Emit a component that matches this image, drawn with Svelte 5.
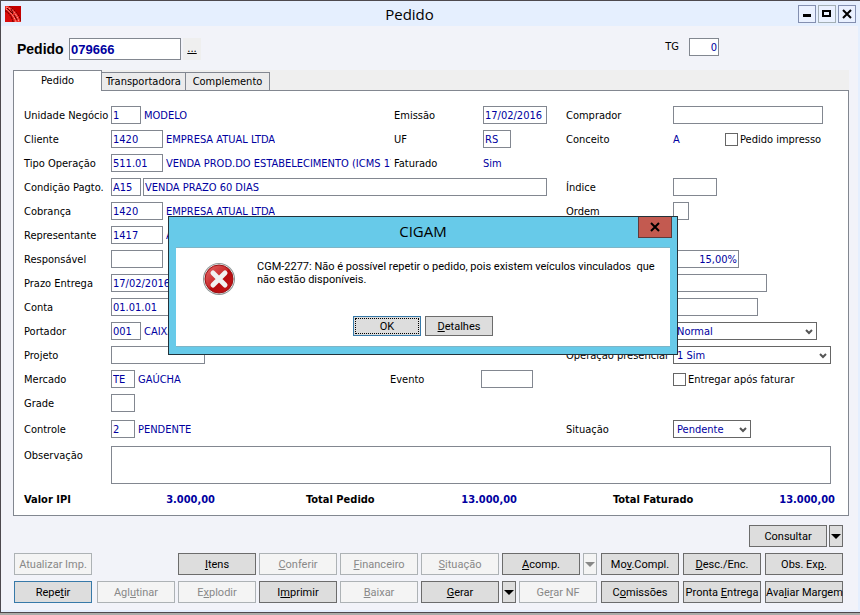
<script>
    const fields = [
        { id: 'unidade', label: 'Unidade Negócio', value: '1', size: 'w30', text: 'MODELO' },
        { id: 'cliente', label: 'Cliente', value: '1420', size: 'w52', text: 'EMPRESA ATUAL LTDA' },
        { id: 'tipo', label: 'Tipo Operação', value: '511.01', size: 'w52', text: 'VENDA PROD.DO ESTABELECIMENTO (ICMS 17' },
        { id: 'condicao', label: 'Condição Pagto.', value: 'A15', size: 'w30', extra: 'VENDA PRAZO 60 DIAS' },
        { id: 'cobranca', label: 'Cobrança', value: '1420', size: 'w52', text: 'EMPRESA ATUAL LTDA' },
        { id: 'representante', label: 'Representante', value: '1417', size: 'w52', text: 'A' },
        { id: 'responsavel', label: 'Responsável', value: '', size: 'w52' },
        { id: 'prazo', label: 'Prazo Entrega', value: '17/02/2016', size: 'w66' },
        { id: 'conta', label: 'Conta', value: '01.01.01', size: 'w94' },
        { id: 'portador', label: 'Portador', value: '001', size: 'w30', text: 'CAIXA' },
        { id: 'projeto', label: 'Projeto', value: '', size: 'w94' },
        { id: 'mercado', label: 'Mercado', value: 'TE', size: 'w24', text: 'GAÚCHA' },
        { id: 'grade', label: 'Grade', value: '', size: 'w24' }
    ];

    const middle = {
        unidade: { label: 'Emissão', value: '17/02/2016', size: 'w64' },
        cliente: { label: 'UF', value: 'RS', size: 'w28' },
        tipo: { label: 'Faturado', text: 'Sim' },
        mercado: { label: 'Evento', value: '', size: 'w52' }
    };

    const right = {
        unidade: { label: 'Comprador', value: '', size: 'w150' },
        cliente: { label: 'Conceito', text: 'A', check: 'Pedido impresso' },
        condicao: { label: 'Índice', value: '', size: 'w44' },
        cobranca: { label: 'Ordem', value: '', size: 'w16' },
        responsavel: { value: '15,00%', size: 'w66', align: 'right' },
        prazo: { value: '', size: 'w94' },
        conta: { value: '', size: 'w85' },
        portador: { options: ['Normal'], size: 'w144' },
        projeto: { label: 'Operação presencial', options: ['1 Sim', '0 Não'], size: 'w158' },
        mercado: { check: 'Entregar após faturar' }
    };

    // [before, access key, after, state]
    const rows = [
        {
            first: ['Atualizar Imp.', '', '', 'off'],
            center: [
                ['', 'I', 'tens'],
                ['', 'C', 'onferir', 'off'],
                ['', 'F', 'inanceiro', 'off'],
                ['', 'S', 'ituação', 'off'],
                ['', 'A', 'comp.'],
                ['arrow', '', '', 'off']
            ],
            end: [['Mo', 'v', '.Compl.'], ['', 'D', 'esc./Enc.'], ['Obs. Ex', 'p', '.']]
        },
        {
            first: ['Repe', 't', 'ir', 'active'],
            center: [
                ['Agl', 'u', 'tinar', 'off'],
                ['E', 'x', 'plodir', 'off'],
                ['I', 'm', 'primir'],
                ['', 'B', 'aixar', 'off'],
                ['', 'G', 'erar'],
                ['arrow', '', ''],
                ['Ge', 'r', 'ar NF', 'off']
            ],
            end: [['C', 'o', 'missões'], ['Pronta ', 'E', 'ntrega'], ['Ava', 'l', 'iar Margem']]
        }
    ];

    let dialogOpen = $state(true);
</script>

{#snippet actionButton(b)}
    {#if b[0] === 'arrow'}
        <button class="btn drop" disabled={b[3] === 'off'} aria-label="Mais opções">
            <svg width="10" height="5" viewBox="0 0 10 5"><path d="M0 0H10L5 5Z" fill="currentColor" /></svg>
        </button>
    {:else}
        <button class="btn" class:active={b[3] === 'active'} disabled={b[3] === 'off'}>{b[0]}<u>{b[1]}</u>{b[2]}</button>
    {/if}
{/snippet}

{#snippet dropdown(id, options, size)}
    <span class="select {size}">
        <select {id} aria-label={id}>
            {#each options as option}
                <option>{option}</option>
            {/each}
        </select>
        <svg width="8" height="7" viewBox="0 0 8 7"><path d="M1 2L4 5L7 2" fill="none" stroke="#555" stroke-width="2" /></svg>
    </span>
{/snippet}

<div class="window">
    <header class="titlebar">
        <svg width="16" height="16" viewBox="0 0 16 16">
            <rect width="16" height="16" fill="#b80404" />
            <path d="M5 0H16V13C14 8 10 3 5 0Z" fill="#c40000" />
            <path d="M0 0H4C10 4 14 9 16 16H9C8 11 5 6 0 3Z" fill="#ec2b24" />
            <path d="M0 5C4 7 7 11 8 16H0Z" fill="#d90c0c" />
            <path d="M1 1C7 3 12 8 14 16M1 3C5 6 9 10 11 16" fill="none" stroke="#ff9a90" stroke-dasharray="2 1" />
            <path d="M4 0C10 4 14 9 16 15M0 5C4 7 7 11 8 16" fill="none" stroke="#7a0000" stroke-dasharray="2 1" />
            <path d="M2 2L8 8M6 3L8 7M9 9L12 14" stroke="#5c0000" />
        </svg>
        <h1>Pedido</h1>
        <div class="controls">
            <button aria-label="Minimizar"><svg width="16" height="16" viewBox="0 0 16 16"><path d="M4 8H12V11H4Z" /></svg></button>
            <button class="max" aria-label="Maximizar"><svg width="16" height="16" viewBox="0 0 16 16"><path d="M4 5H11V10H4Z" fill="none" stroke="#000" stroke-width="2" /></svg></button>
            <button aria-label="Fechar"><svg width="16" height="16" viewBox="0 0 16 16"><path d="M4 4L12 12M12 4L4 12" stroke="#000" stroke-width="2" /></svg></button>
        </div>
    </header>

    <div class="content">
        <div class="top">
            <label class="big" for="pedido">Pedido</label>
            <input id="pedido" class="number" value="079666" />
            <button class="lookup" aria-label="Procurar pedido">...</button>
            <div class="tg">
                <label for="tg">TG</label>
                <input id="tg" class="w30 right" value="0" />
            </div>
        </div>

        <div class="tabs" role="tablist">
            <button class="selected" role="tab" aria-selected="true">Pedido</button>
            <button role="tab" aria-selected="false">Transportadora</button>
            <button role="tab" aria-selected="false">Complemento</button>
        </div>

        <main class="panel">
            {#each fields as f}
                {@const m = middle[f.id]}
                {@const r = right[f.id]}
                <div class="row" class:event={f.id === 'mercado'}>
                    <div class="left" class:span={f.extra}>
                        <label for={f.id}>{f.label}</label>
                        <input id={f.id} class={f.size} value={f.value} />
                        {#if f.extra}
                            <input class="grow" aria-label="Descrição da condição" value={f.extra} />
                        {:else if f.text}
                            <span class="value">{f.text}</span>
                        {/if}
                    </div>
                    {#if !f.extra}
                        <div class="middle">
                            {#if m}
                                <label for="m-{f.id}">{m.label}</label>
                                {#if m.text}
                                    <output id="m-{f.id}">{m.text}</output>
                                {:else}
                                    <input id="m-{f.id}" class={m.size} value={m.value} />
                                {/if}
                            {/if}
                        </div>
                    {/if}
                    <div class="side">
                        {#if r}
                            <label for="r-{f.id}">{r.label ?? ''}</label>
                            {#if r.options}
                                {@render dropdown('r-' + f.id, r.options, r.size)}
                            {:else if r.size}
                                <input id="r-{f.id}" class="{r.size} {r.align ?? ''}" value={r.value} />
                            {:else if r.text}
                                <output id="r-{f.id}" class="w52">{r.text}</output>
                            {/if}
                            {#if r.check}
                                <label class="check"><input type="checkbox" />{r.check}</label>
                            {/if}
                        {/if}
                    </div>
                </div>
            {/each}

            <div class="row control">
                <div class="left">
                    <label for="controle">Controle</label>
                    <input id="controle" class="w24" value="2" />
                    <span class="value">PENDENTE</span>
                </div>
                <div class="middle"></div>
                <div class="side">
                    <label for="situacao">Situação</label>
                    {@render dropdown('situacao', ['Pendente'], 'w78')}
                </div>
            </div>

            <div class="notes">
                <label for="obs">Observação</label>
                <textarea id="obs"></textarea>
            </div>

            <div class="totals">
                <span>Valor IPI</span><b>3.000,00</b>
                <span>Total Pedido</span><b>13.000,00</b>
                <span>Total Faturado</span><b>13.000,00</b>
            </div>
        </main>

        <footer>
            <div class="actions">
                <div class="end split">
                    <button class="btn">Consultar</button>
                    {@render actionButton(['arrow', '', ''])}
                </div>
            </div>
            {#each rows as row}
                <div class="actions">
                    {@render actionButton(row.first)}
                    <div class="center">
                        {#each row.center as b}
                            {@render actionButton(b)}
                        {/each}
                    </div>
                    <div class="end">
                        {#each row.end as b}
                            {@render actionButton(b)}
                        {/each}
                    </div>
                </div>
            {/each}
        </footer>
    </div>

    {#if dialogOpen}
        <div class="dialog" role="alertdialog" aria-labelledby="dialog-title" aria-describedby="dialog-text">
            <div class="dialog-head">
                <h2 id="dialog-title">CIGAM</h2>
                <button class="close" aria-label="Fechar" onclick={() => (dialogOpen = false)}>
                    <svg width="10" height="10" viewBox="0 0 10 10"><path d="M1 1L9 9M9 1L1 9" stroke="#000" stroke-width="2" /></svg>
                </button>
            </div>
            <div class="dialog-body">
                <div class="message">
                    <svg width="34" height="34" viewBox="0 0 34 34">
                        <defs>
                            <linearGradient id="red" x1="0" y1="0" x2="1" y2="1">
                                <stop offset="0" stop-color="#e46a6a" />
                                <stop offset="0.48" stop-color="#c92a2c" />
                                <stop offset="0.52" stop-color="#b50a0d" />
                                <stop offset="1" stop-color="#c5161a" />
                            </linearGradient>
                        </defs>
                        <circle cx="17" cy="17" r="16" fill="#8f9494" />
                        <circle cx="17" cy="17" r="15" fill="#e8eeee" />
                        <circle cx="17" cy="17" r="14" fill="url(#red)" stroke="#9b1013" />
                        <path d="M11 11L23 23M23 11L11 23" stroke="#f1f1f1" stroke-width="5" stroke-linecap="round" />
                    </svg>
                    <p id="dialog-text">CGM-2277: Não é possível repetir o pedido, pois existem veículos vinculados&nbsp; que não estão disponíveis.</p>
                </div>
                <div class="dialog-buttons">
                    <button class="btn focused" onclick={() => (dialogOpen = false)}>OK</button>
                    <button class="btn"><u>D</u>etalhes</button>
                </div>
            </div>
        </div>
    {/if}
</div>

<style>
    :global(body) {
        background: #aaaca9;
        margin: 0;
    }

    .window {
        position: relative;
        box-sizing: border-box;
        border: 1px solid #4d494e;
        border-right: 0;
        background: #e5effe;
        padding: 0 2px 2px 0;
        font: 11px/14px "DejaVu Sans Condensed", "Noto Sans", sans-serif;
        color: #000;
    }

    .window * {
        box-sizing: border-box;
    }

    input, select, textarea, button {
        font: inherit;
        color: inherit;
        margin: 0;
        border-radius: 0;
    }

    input, select, textarea {
        height: 18px;
        padding: 1px 1px 0;
        border: 1px solid #828790;
        background: #fff;
        color: #0000a0;
        flex-shrink: 0;
    }

    button {
        padding: 0;
    }

    .right { text-align: right; }
    .w16 { width: 16px; }
    .w24 { width: 24px; }
    .w28 { width: 28px; }
    .w30 { width: 30px; }
    .w44 { width: 44px; }
    .w52 { width: 52px; }
    .w64 { width: 64px; }
    .w66 { width: 66px; }
    .w78 { width: 78px; }
    .w85 { width: 85px; }
    .w94 { width: 94px; }
    .w144 { width: 144px; }
    .w150 { width: 150px; }
    .w158 { width: 158px; }

    .titlebar {
        display: flex;
        align-items: center;
        height: 25px;
        padding: 0 2px 0 4px;
    }

    h1, h2 {
        flex: 1;
        margin: 0;
        font: 15px/20px "Open Sans", "Noto Sans", sans-serif;
        text-align: center;
    }

    .controls {
        display: flex;
        gap: 2px;
    }

    .controls button {
        display: flex;
        width: 18px;
        height: 18px;
        border: 1px solid #838fb0;
        background: #eaf1ff;
    }

    .controls .max {
        border-color: #a3afb5;
    }

    .content {
        background: #f2f3f9;
        padding: 12px 9px 7px 12px;
    }

    .top {
        display: flex;
        align-items: flex-start;
        height: 32px;
    }

    .big {
        width: 56px;
        padding-left: 4px;
        font: bold 14px/22px "Liberation Sans", sans-serif;
    }

    .top .number {
        width: 112px;
        height: 22px;
        font: bold 13px "Liberation Sans", sans-serif;
    }

    .lookup {
        width: 18px;
        height: 22px;
        margin-left: 2px;
        border: 0;
        background: #efefef;
        text-decoration: underline;
    }

    .tg {
        display: flex;
        align-items: center;
        gap: 10px;
        margin-left: auto;
        padding-right: 130px;
    }

    .tabs {
        display: flex;
        align-items: flex-end;
        height: 20px;
        background: #efefef;
    }

    .tabs button {
        height: 18px;
        width: 84px;
        border: 1px solid #828790;
        border-width: 1px 1px 0 0;
        background: #ebebeb;
        white-space: nowrap;
    }

    .tabs .selected {
        width: 89px;
        height: 21px;
        margin-bottom: -1px;
        border-left-width: 1px;
        background: #fff;
        z-index: 1;
    }

    .panel {
        padding: 12px 17px 8px 10px;
        border: 1px solid #828790;
        background: #fff;
    }

    .row {
        display: grid;
        grid-template-columns: minmax(0, 1fr) 172px 265px;
        height: 24px;
        align-items: center;
        white-space: nowrap;
    }

    .row.event {
        grid-template-columns: minmax(0, 1fr) 176px 265px;
    }

    .row.event .middle > label {
        width: 91px;
    }

    .row.control {
        height: 28px;
    }

    .row label, .value, output {
        padding-top: 1px;
    }

    .left, .middle, .side {
        display: flex;
        align-items: center;
        min-width: 0;
    }

    .left > label, .notes > label {
        flex: 0 0 87px;
    }

    .left {
        padding-right: 3px;
    }

    .left.span {
        grid-column: span 2;
        gap: 2px;
        padding-right: 19px;
    }

    .left.span > label {
        flex-basis: 85px;
    }

    .grow {
        flex: 1;
    }

    .value {
        min-width: 0;
        margin-left: 3px;
        overflow: hidden;
        color: #0000a0;
    }

    output {
        color: #0000a0;
    }

    .middle > label {
        width: 89px;
    }

    .side > label:first-child {
        flex: 0 0 107px;
    }

    .check {
        display: flex;
        align-items: center;
        gap: 2px;
    }

    .check input {
        appearance: none;
        width: 13px;
        height: 13px;
        border-color: #666;
    }

    .select {
        display: grid;
        align-items: center;
    }

    .select select {
        grid-area: 1 / 1;
        width: 100%;
        appearance: none;
        padding: 2px 3px 0;
        border-color: #666;
    }

    .select svg {
        grid-area: 1 / 1;
        justify-self: end;
        margin-right: 4px;
        pointer-events: none;
    }

    .notes {
        display: flex;
        padding-top: 3px;
    }

    .notes > label {
        padding-top: 3px;
    }

    textarea {
        display: block;
        flex: 1;
        height: 38px;
        resize: none;
    }

    .totals {
        display: grid;
        grid-template-columns: 92px 99px 183px 119px minmax(0, 1fr) 100px;
        margin: 9px -4px 0 0;
        font-weight: bold;
    }

    .totals span:nth-of-type(2) {
        padding-left: 91px;
    }

    .totals span:nth-of-type(3) {
        padding-left: 96px;
    }

    .totals b {
        color: #0000a0;
        text-align: right;
    }

    footer {
        display: grid;
        gap: 6px;
        padding: 9px 6px 0 1px;
    }

    .actions, .center, .end {
        display: flex;
    }

    .center {
        gap: 3px;
        margin-left: auto;
    }

    .end {
        gap: 4px;
        margin-left: 4px;
    }

    .end.split {
        gap: 2px;
        margin-left: auto;
    }

    .btn {
        width: 78px;
        height: 22px;
        padding-top: 1px;
        border: 1px solid #6c6c6c;
        background: #dddddd;
        font: 11px/16px Roboto, "Liberation Sans", sans-serif;
        white-space: nowrap;
    }

    .btn:disabled {
        border-color: #adb2b5;
        background: #f4f4f4;
        color: #888;
    }

    .btn.active {
        border-color: #3779a8;
    }

    .btn.drop {
        display: flex;
        align-items: center;
        justify-content: center;
        width: 14px;
    }

    .dialog {
        position: absolute;
        left: 167px;
        top: 215px;
        width: 510px;
        border: 1px solid #23323a;
        background: #67cae9;
        padding: 0 7px 7px;
    }

    .dialog-head {
        display: flex;
        align-items: flex-start;
        height: 30px;
        margin-right: -2px;
    }

    h2 {
        padding: 4px 0 0 32px;
    }

    .close {
        display: flex;
        align-items: center;
        justify-content: center;
        width: 34px;
        height: 21px;
        border: 1px solid #5e3a3b;
        border-top: 0;
        background: #c35a50;
    }

    .dialog-body {
        background: #fff;
        border: 1px solid #7eb5c7;
        border-width: 1px 0;
        padding: 12px 6px 10px 26px;
    }

    .message {
        display: flex;
        gap: 21px;
        height: 56px;
    }

    .message svg {
        flex-shrink: 0;
        margin-top: 2px;
    }

    .message p {
        margin: 0;
        font: 11px/13px Roboto, "Liberation Sans", sans-serif;
    }

    .dialog-buttons {
        display: flex;
        justify-content: center;
        gap: 4px;
        padding-right: 20px;
    }

    .dialog-buttons .btn {
        width: 68px;
        height: 20px;
    }

    .dialog-buttons .focused {
        border-color: #3779a8;
        outline: 1px dotted #000;
        outline-offset: -3px;
    }
</style>
